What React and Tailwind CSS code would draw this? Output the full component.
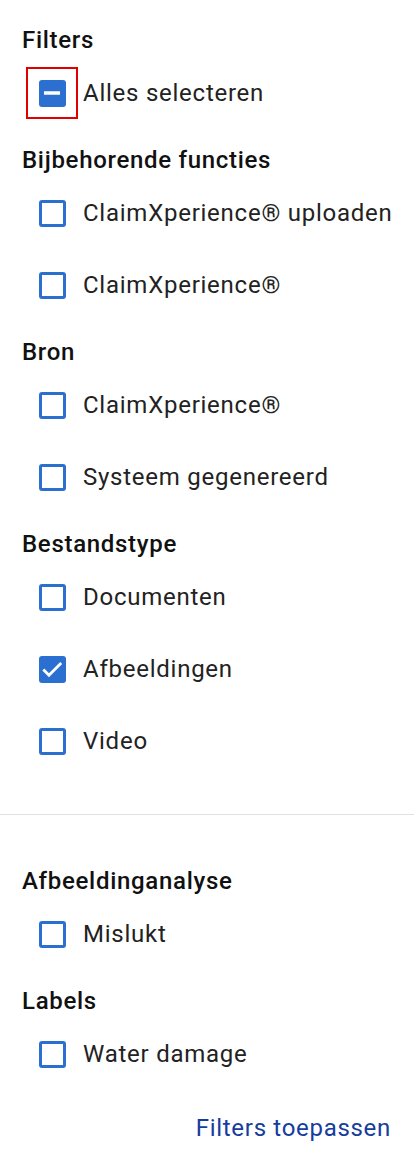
import { useState } from 'react';

const sections = [
  { title: 'Bijbehorende functies', items: ['ClaimXperience® uploaden', 'ClaimXperience®'] },
  { title: 'Bron', items: ['ClaimXperience®', 'Systeem gegenereerd'] },
  { title: 'Bestandstype', items: ['Documenten', 'Afbeeldingen', 'Video'] },
];

const extraSections = [
  { title: 'Afbeeldinganalyse', items: ['Mislukt'] },
  { title: 'Labels', items: ['Water damage'] },
];

const Box = ({ state, focused }) => (
  <span
    className={
      'w-[52px] h-[52px] flex items-center justify-center shrink-0 ' +
      (focused ? 'outline-2 outline-[#e00000] -outline-offset-2' : '')
    }
  >
    {state === 'none' ? (
      <span className="w-[27px] h-[27px] rounded-[3px] border-[3px] border-[#2b6fd0]" />
    ) : (
      <span className="w-[27px] h-[27px] rounded-[3px] bg-[#2b6fd0] flex items-center justify-center">
        {state === 'all' ? (
          <svg width="24" height="24" viewBox="0 0 24 24">
            <path d="M4 12h16" stroke="white" strokeWidth="3.5" fill="none" />
          </svg>
        ) : (
          <svg width="26" height="26" viewBox="0 0 24 24">
            <path d="M4 12.5l5.2 5.2L20.5 6.5" stroke="white" strokeWidth="2.6" fill="none" />
          </svg>
        )}
      </span>
    )}
  </span>
);

const Row = ({ label, state, onClick, focused }) => (
  <div className="h-[72px] flex items-center pl-[4px] cursor-pointer" onClick={onClick}>
    <Box state={state} focused={focused} />
    <span className="ml-[5px] text-[24px] tracking-[0.75px] text-[#222] whitespace-nowrap">{label}</span>
  </div>
);

const Heading = ({ children, first }) => (
  <h2 className={'h-[34px] flex items-center text-[24px] font-medium tracking-[0.7px] text-[#111] ' + (first ? '' : 'mt-[14px]')}>
    {children}
  </h2>
);

export default function App() {
  const [checked, setChecked] = useState({ 'Bestandstype-Afbeeldingen': true });
  const toggle = (k) => setChecked({ ...checked, [k]: !checked[k] });

  const renderSection = (s) => (
    <div key={s.title}>
      <Heading>{s.title}</Heading>
      {s.items.map((it) => {
        const k = s.title + '-' + it;
        return <Row key={k} label={it} state={checked[k] ? 'checked' : 'none'} onClick={() => toggle(k)} />;
      })}
    </div>
  );

  return (
    <div className="w-[414px] bg-white pt-[23px] pb-[24px]" style={{ fontFamily: 'Roboto, "Noto Sans", sans-serif' }}>
      <div className="px-[22px]">
        <Heading first>Filters</Heading>
        <Row label="Alles selecteren" state="all" focused />
        {sections.map(renderSection)}
      </div>
      <div className="mt-[37px] border-t border-[#e2e2e2]" />
      <div className="px-[22px] pt-[35px]">
        {extraSections.map(renderSection)}
        <div className="flex justify-end pr-[1px] mt-[20px]">
          <button className="text-[24px] tracking-[0.7px] text-[#163c9c]">Filters toepassen</button>
        </div>
      </div>
    </div>
  );
}
